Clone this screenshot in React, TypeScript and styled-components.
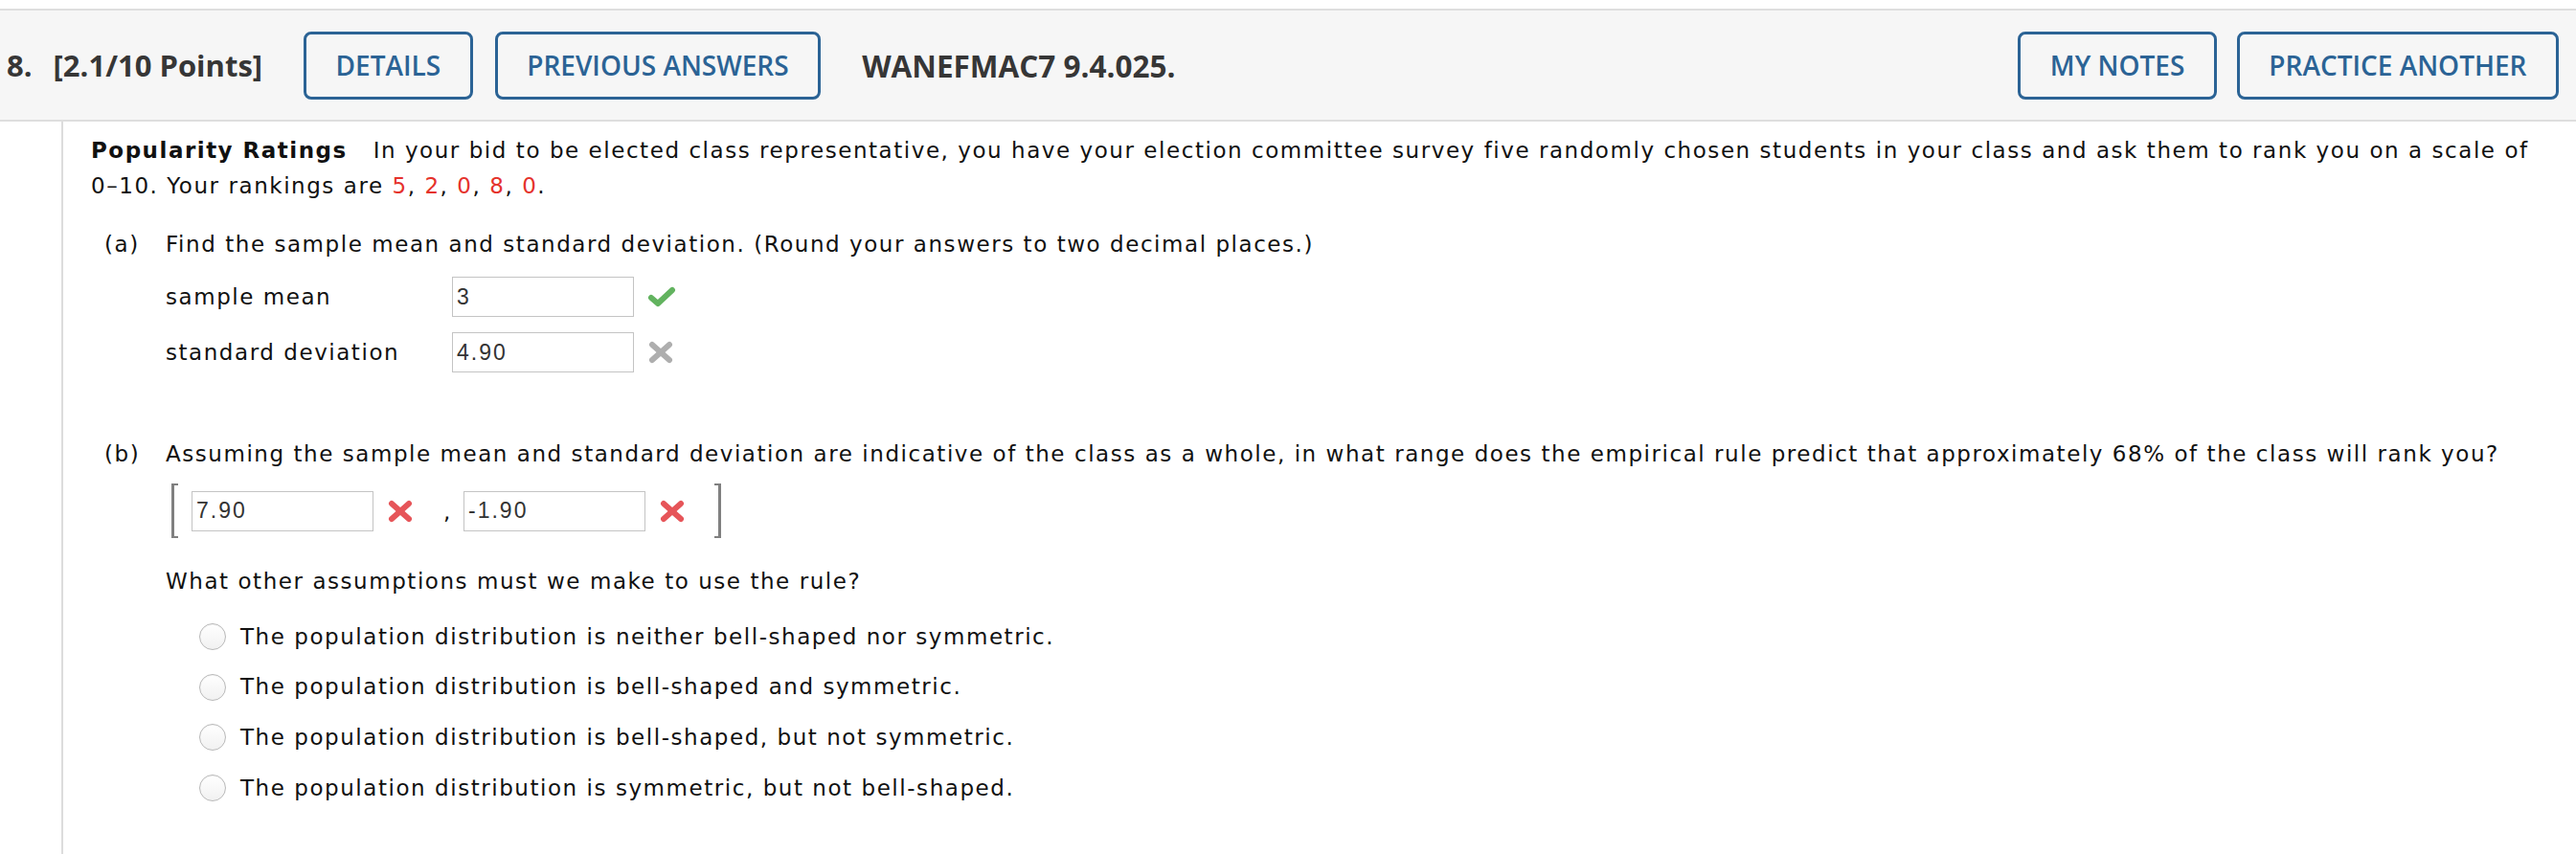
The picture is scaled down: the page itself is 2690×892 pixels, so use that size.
import React from "react";
import styled, { createGlobalStyle } from "styled-components";

const GlobalStyle = createGlobalStyle`
  html, body {
    margin: 0;
    padding: 0;
    background: #ffffff;
  }
  body {
    font-family: "DejaVu Sans", Verdana, sans-serif;
    color: #111111;
  }
  * { box-sizing: border-box; }
`;

const Page = styled.div`
  display: flex;
  flex-direction: column;
  height: 892px;
  padding-top: 9px;
  overflow: hidden;
`;

const HeaderBar = styled.header`
  display: flex;
  align-items: center;
  height: 118px;
  padding: 0 18px 0 7px;
  background: #f6f6f6;
  border-top: 2px solid #dedede;
  border-bottom: 2px solid #dedede;
  font-family: "Open Sans", "Liberation Sans", sans-serif;
`;

const HeaderText = styled.span<{ $gap?: number; $size?: number }>`
  font-size: ${(p) => p.$size ?? 31}px;
  font-weight: 700;
  color: #363636;
  white-space: nowrap;
  margin-right: ${(p) => p.$gap ?? 0}px;
`;

const ButtonGroup = styled.div<{ $gap: number; $push?: boolean }>`
  display: flex;
  gap: ${(p) => p.$gap}px;
  margin-right: 43px;
  ${(p) => (p.$push ? "margin-left: auto; margin-right: 0;" : "")}
`;

const HeaderButton = styled.button`
  height: 71px;
  padding: 0 30.5px;
  border: 3px solid #2b6395;
  border-radius: 8px;
  background: transparent;
  color: #2b6395;
  font-family: "Open Sans", "Liberation Sans", sans-serif;
  font-size: 28px;
  font-weight: 600;
  white-space: nowrap;
  cursor: pointer;
`;

const Body = styled.main`
  flex: 1;
  margin-left: 64px;
  border-left: 2px solid #dcdcdc;
  padding: 12px 30px 0 29px;
  font-size: 23px;
  line-height: 37px;
  letter-spacing: 1.55px;
`;

const Intro = styled.p`
  margin: 0 0 24px;
`;

const Bold = styled.strong`
  font-weight: 700;
  letter-spacing: 1.5px;
  margin-right: 18px;
`;

const Red = styled.span`
  color: #e5322b;
`;

const PartRow = styled.div<{ $top?: number }>`
  display: flex;
  margin-top: ${(p) => p.$top ?? 0}px;
`;

const PartLabel = styled.span`
  width: 78px;
  padding-left: 14px;
  flex-shrink: 0;
`;

const Indented = styled.div<{ $top: number; $gap: number }>`
  display: flex;
  flex-direction: column;
  gap: ${(p) => p.$gap}px;
  margin: ${(p) => p.$top}px 0 0 78px;
`;

const FieldRow = styled.div`
  display: flex;
  align-items: center;
  height: 42px;
`;

const FieldLabel = styled.span`
  width: 299px;
  flex-shrink: 0;
`;

const AnswerBox = styled.input`
  width: 190px;
  height: 42px;
  padding: 0 0 0 4px;
  border: 1.5px solid #c4c4c4;
  background: #fff;
  font-family: "Liberation Sans", Arial, sans-serif;
  font-size: 23px;
  letter-spacing: 2px;
  color: #333;
  outline: none;
`;

const Mark = styled.svg`
  flex-shrink: 0;
  margin-left: 14px;
`;

const IntervalRow = styled.div`
  display: flex;
  align-items: center;
  height: 57px;
  margin: 12px 0 0 84px;
`;

const Bracket = styled.span<{ $side: "left" | "right" }>`
  width: 7px;
  height: 57px;
  border: 2px solid #808080;
  ${(p) =>
    p.$side === "left"
      ? "border-right: none; margin-right: 14px; border-left-width: 3px;"
      : "border-left: none; margin-left: 30px; border-right-width: 3px;"}
`;

const Comma = styled.span`
  margin: 0 17px 0 31px;
  width: 4px;
  line-height: 42px;
`;

const Question = styled.div`
  margin: 27px 0 0 78px;
`;

const Choices = styled.div`
  display: flex;
  flex-direction: column;
  margin: 13px 0 0 113px;
`;

const Choice = styled.label`
  display: flex;
  align-items: center;
  height: 52.6px;
`;

const Radio = styled.input`
  appearance: none;
  width: 28px;
  height: 28px;
  margin: 0 15px 0 0;
  border-radius: 50%;
  border: 1.5px solid #b9b9b9;
  background: linear-gradient(#ffffff, #f1f1f1);
  box-shadow: inset 0 1px 1px rgba(0, 0, 0, 0.05);
  flex-shrink: 0;
`;

const CheckMark = () => (
  <Mark width="30" height="22" viewBox="0 0 30 22">
    <polyline
      points="4,12 11,18 26,4"
      fill="none"
      stroke="#62b35f"
      strokeWidth="6"
      strokeLinecap="round"
      strokeLinejoin="round"
    />
  </Mark>
);

const CrossMark = ({ color }: { color: string }) => (
  <Mark width="28" height="24" viewBox="0 0 28 24">
    <g stroke={color} strokeWidth="6" strokeLinecap="round">
      <line x1="5" y1="4" x2="23" y2="20" />
      <line x1="23" y1="4" x2="5" y2="20" />
    </g>
  </Mark>
);

const choices = [
  "The population distribution is neither bell-shaped nor symmetric.",
  "The population distribution is bell-shaped and symmetric.",
  "The population distribution is bell-shaped, but not symmetric.",
  "The population distribution is symmetric, but not bell-shaped.",
];

export default function App() {
  return (
    <>
      <GlobalStyle />
      <Page>
        <HeaderBar>
          <HeaderText $gap={22}>8.</HeaderText>
          <HeaderText $gap={43}>[2.1/10 Points]</HeaderText>
          <ButtonGroup $gap={23}>
            <HeaderButton>DETAILS</HeaderButton>
            <HeaderButton>PREVIOUS ANSWERS</HeaderButton>
          </ButtonGroup>
          <HeaderText $size={31.5}>WANEFMAC7 9.4.025.</HeaderText>
          <ButtonGroup $gap={21} $push>
            <HeaderButton>MY NOTES</HeaderButton>
            <HeaderButton>PRACTICE ANOTHER</HeaderButton>
          </ButtonGroup>
        </HeaderBar>
        <Body>
          <Intro>
            <Bold>Popularity Ratings</Bold> In your bid to be elected class
            representative, you have your election committee survey five
            randomly chosen students in your class and ask them to rank you on
            a scale of 0–10. Your rankings are <Red>5</Red>, <Red>2</Red>,{" "}
            <Red>0</Red>, <Red>8</Red>, <Red>0</Red>.
          </Intro>
          <PartRow>
            <PartLabel>(a)</PartLabel>
            <span>
              Find the sample mean and standard deviation. (Round your answers
              to two decimal places.)
            </span>
          </PartRow>
          <Indented $top={15} $gap={16}>
            <FieldRow>
              <FieldLabel>sample mean</FieldLabel>
              <AnswerBox defaultValue="3" readOnly />
              <CheckMark />
            </FieldRow>
            <FieldRow>
              <FieldLabel>standard deviation</FieldLabel>
              <AnswerBox defaultValue="4.90" readOnly />
              <CrossMark color="#aeaeae" />
            </FieldRow>
          </Indented>
          <PartRow $top={67}>
            <PartLabel>(b)</PartLabel>
            <span>
              Assuming the sample mean and standard deviation are indicative of
              the class as a whole, in what range does the empirical rule
              predict that approximately 68% of the class will rank you?
            </span>
          </PartRow>
          <IntervalRow>
            <Bracket $side="left" />
            <AnswerBox defaultValue="7.90" readOnly />
            <CrossMark color="#e65559" />
            <Comma>,</Comma>
            <AnswerBox defaultValue="-1.90" readOnly />
            <CrossMark color="#e65559" />
            <Bracket $side="right" />
          </IntervalRow>
          <Question>What other assumptions must we make to use the rule?</Question>
          <Choices>
            {choices.map((c) => (
              <Choice key={c}>
                <Radio type="radio" name="assumption" />
                {c}
              </Choice>
            ))}
          </Choices>
        </Body>
      </Page>
    </>
  );
}
